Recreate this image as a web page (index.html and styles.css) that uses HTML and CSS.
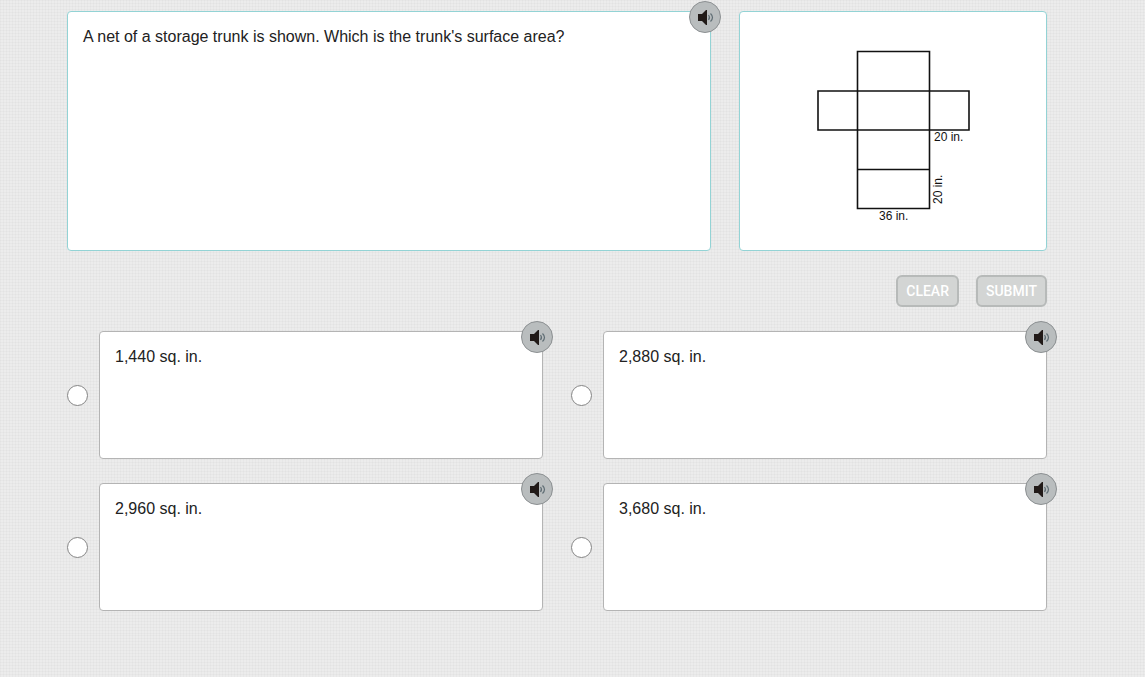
FILE: index.html
```html
<!DOCTYPE html>
<html lang="en">
<head>
  <meta charset="UTF-8">
  <meta name="viewport" content="width=device-width, initial-scale=1.0">
  <title>Surface area</title>
  <link rel="stylesheet" href="styles.css">
</head>
<body>
  <svg class="sprite" aria-hidden="true">
    <symbol id="speaker" viewBox="0 0 30 30">
      <path fill="#211a18" d="M8 12h4l4-4h1v15h-1l-4-4H8z"/>
      <path fill="none" stroke="#5f6d74" stroke-width="1.2" d="M18.500 13q2 2.500 0 5M20.500 11.500q4 4 0 8"/>
    </symbol>
  </svg>

  <form class="page">
    <div class="top">
      <div class="card question">
        <p class="text">A net of a storage trunk is shown. Which is the trunk's surface area?</p>
        <button type="button" class="audio" aria-label="Read question"><svg><use href="#speaker"/></svg></button>
      </div>
      <div class="card figure">
        <svg class="net" width="154" height="174" viewBox="0 0 154 174">
          <g fill="none" stroke="#111" stroke-width="1.6">
            <path d="M41.500 2.500h72v157h-72z"/>
            <path d="M2 42h151v39H2z"/>
            <path d="M41.500 120.500h72"/>
          </g>
          <text x="118" y="92">20 in.</text>
          <text x="63" y="171">36 in.</text>
          <text transform="translate(126 155) rotate(-90)">20 in.</text>
        </svg>
      </div>
    </div>

    <div class="actions">
      <button type="reset" class="btn">CLEAR</button>
      <button type="submit" class="btn">SUBMIT</button>
    </div>

    <div class="answers">
      <div class="answer">
        <input type="radio" name="answer" id="a1">
        <div class="card">
          <label class="text" for="a1">1,440 sq. in.</label>
          <button type="button" class="audio" aria-label="Read answer 1"><svg><use href="#speaker"/></svg></button>
        </div>
      </div>
      <div class="answer">
        <input type="radio" name="answer" id="a2">
        <div class="card">
          <label class="text" for="a2">2,880 sq. in.</label>
          <button type="button" class="audio" aria-label="Read answer 2"><svg><use href="#speaker"/></svg></button>
        </div>
      </div>
      <div class="answer">
        <input type="radio" name="answer" id="a3">
        <div class="card">
          <label class="text" for="a3">2,960 sq. in.</label>
          <button type="button" class="audio" aria-label="Read answer 3"><svg><use href="#speaker"/></svg></button>
        </div>
      </div>
      <div class="answer">
        <input type="radio" name="answer" id="a4">
        <div class="card">
          <label class="text" for="a4">3,680 sq. in.</label>
          <button type="button" class="audio" aria-label="Read answer 4"><svg><use href="#speaker"/></svg></button>
        </div>
      </div>
    </div>
  </form>
</body>
</html>
```

FILE: styles.css
```css
* {
  box-sizing: border-box;
  margin: 0;
  padding: 0;
}
/* woven paper texture */
body {
  background-color: #ececec;
  background-image:
    repeating-linear-gradient(90deg, rgba(0, 0, 0, .02) 0 1px, transparent 1px 3px),
    repeating-linear-gradient(rgba(0, 0, 0, .02) 0 1px, transparent 1px 3px);
  color: #222;
  font: 16px/20px "Liberation Sans", Arial, sans-serif;
}
.sprite {
  display: none;
}
.page {
  padding: 11px 98px 24px 67px;
}

.card {
  position: relative;
  padding: 15px;
  background: #fff;
  border: 1px solid #b4b4b4;
  border-radius: 4px;
}
.text {
  display: block;
}
.audio {
  position: absolute;
  top: -11px;
  right: -11px;
  width: 32px;
  height: 32px;
  border: 1px solid #8c9092;
  border-radius: 50%;
  background: #b9bdbe;
}
.audio svg {
  display: block;
  width: 30px;
  height: 30px;
}

/* question and figure */
.top {
  display: grid;
  grid-template-columns: 644fr 308fr;
  gap: 28px;
}
.top .card {
  min-height: 240px;
  border-color: #93d3d5;
}
.top .figure {
  display: flex;
  align-items: center;
  justify-content: center;
  padding-top: 25px;
}
.net text {
  font-size: 12px;
  fill: #111;
}

.actions {
  display: flex;
  justify-content: flex-end;
  gap: 17px;
  margin: 24px 0;
}
.btn {
  height: 32px;
  padding: 0 8px;
  border: 2px solid #b7bab9;
  border-radius: 6px;
  background: #d3d5d4;
  color: #fff;
  font: 500 14px/20px Roboto, sans-serif;
}

/* answers */
.answers {
  display: grid;
  grid-template-columns: 1fr 1fr;
  gap: 24px 28px;
}
.answer {
  display: flex;
  align-items: center;
  gap: 11px;
}
.answer .card {
  flex: 1;
  min-height: 128px;
}
.answer input {
  appearance: none;
  width: 21px;
  height: 21px;
  border: 1px solid #858585;
  border-radius: 50%;
  background: #fff;
}
.answer input:checked {
  background: radial-gradient(#333 0 5px, #fff 6px);
}
```
